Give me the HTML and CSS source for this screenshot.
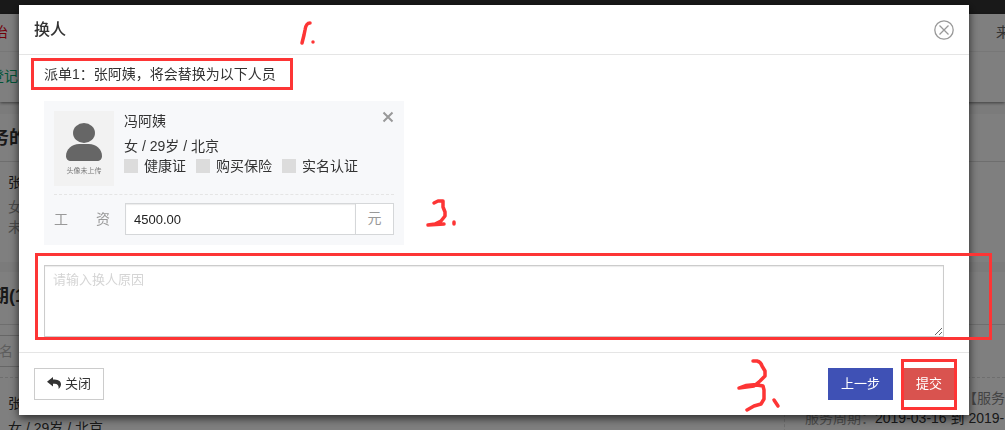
FILE: index.html
```html
<!DOCTYPE html>
<html lang="zh-CN">

<head>
    <meta charset="UTF-8">
    <meta name="viewport" content="width=device-width, initial-scale=1.0">
    <title>换人</title>
    <link rel="stylesheet" href="styles.css">
</head>

<body>
    <div class="page">
        <div class="topbar"></div>
        <header class="header">
            <div class="nav">
                <span class="status">治</span>
                <span class="source">来</span>
            </div>
            <div class="tabs">
                <a href="#">登记</a>
            </div>
        </header>
        <section class="panel">
            <h2>务的</h2>
            <div class="person">
                <p class="name">张</p>
                <p>女</p>
                <p>未</p>
            </div>
        </section>
        <section class="panel period">
            <h2>期(1</h2>
            <div class="search">
                <input type="text" placeholder="名" aria-label="姓名">
            </div>
            <div class="record">
                <div class="record-person">
                    <p>张</p>
                    <p>女 / 29岁 / 北京</p>
                </div>
                <div class="record-order">
                    <p class="tag">【服务</p>
                    <p><span>服务周期：</span>2019-03-16 到 2019-</p>
                </div>
            </div>
        </section>
    </div>

    <div class="overlay">
        <div class="modal" role="dialog" aria-labelledby="modal-title">
            <div class="modal-header">
                <h1 id="modal-title">换人</h1>
                <svg class="mark mark-one" viewBox="0 0 20 26">
                    <path d="M12 3 Q8 3 7 10 L6 15 L4 23" />
                    <path d="M15 22 v.1" />
                </svg>
                <button type="button" class="close" aria-label="关闭窗口">
                    <svg viewBox="0 0 20 20">
                        <circle cx="10" cy="10" r="9.2" />
                        <path d="M5.5 5.5 L14.5 14.5 M14.5 5.5 L5.5 14.5" />
                    </svg>
                </button>
            </div>

            <div class="modal-body">
                <p class="notice">派单1：张阿姨，将会替换为以下人员</p>

                <div class="card">
                    <div class="card-info">
                        <div class="avatar">
                            <svg viewBox="0 0 36 38">
                                <ellipse cx="18" cy="10" rx="11" ry="10" />
                                <path d="M0 33 C0 26 6 21 13 21 H23 C30 21 36 26 36 33 C36 36 34 38 31 38 H5 C2 38 0 36 0 33 Z" />
                            </svg>
                            <span>头像未上传</span>
                        </div>
                        <div class="details">
                            <p class="name">冯阿姨</p>
                            <p>女 / 29岁 / 北京</p>
                            <div class="checks">
                                <label><input type="checkbox">健康证</label>
                                <label><input type="checkbox">购买保险</label>
                                <label><input type="checkbox">实名认证</label>
                            </div>
                        </div>
                        <button type="button" class="remove" aria-label="移除">
                            <svg viewBox="0 0 12 12">
                                <path d="M1.5 1.5 L10.5 10.5 M10.5 1.5 L1.5 10.5" />
                            </svg>
                        </button>
                    </div>
                    <div class="salary">
                        <label for="salary">工 资</label>
                        <input type="text" id="salary" value="4500.00">
                        <span class="unit">元</span>
                    </div>
                    <svg class="mark mark-two" viewBox="0 0 36 32">
                        <path d="M9 5 L13 3 L18 3 L18 9 L20 14 L20 18 L16 23 L10 26 L3 27 L19 26" />
                        <path d="M29 24 v2" />
                    </svg>
                </div>

                <div class="reason">
                    <textarea placeholder="请输入换人原因" aria-label="换人原因"></textarea>
                </div>
            </div>

            <div class="modal-footer">
                <button type="button" class="btn btn-default">
                    <svg viewBox="0 0 14 12">
                        <path d="M6 0 L0 4.7 L6 9.4 V6.8 C10 6.6 12 7.8 11.6 12 C13.4 10.4 14 8.4 14 7 C13.7 3.8 10.5 2.6 6 2.6 Z" />
                    </svg>
                    关闭
                </button>
                <div class="actions">
                    <svg class="mark mark-three" viewBox="0 0 48 56">
                        <path d="M18 4 H22 Q26 5 27 9 L30 14 V19 L25 24 L19 29 L4 31 Q15 26 28 29 L29 33 V42 L26 47 L19 49 L12 53" />
                        <path d="M39 43 L43 49" />
                    </svg>
                    <button type="button" class="btn btn-primary">上一步</button>
                    <button type="submit" class="btn btn-danger">提交</button>
                </div>
            </div>
        </div>
    </div>
</body>

</html>
```
FILE: styles.css
```css
*,
*::before,
*::after {
    margin: 0;
    padding: 0;
    box-sizing: border-box;
}

body {
    font-family: "Liberation Sans", "Noto Sans CJK SC", sans-serif;
    font-size: 14px;
    line-height: 20px;
    color: #333;
    background-color: #f7f7f7;
    overflow: hidden;
}

button,
input,
textarea {
    font-family: inherit;
}

/* page behind the dialog */
.page {
    height: 100vh;
    overflow: hidden;
}

.topbar {
    height: 14px;
    background-color: #333;
}

.header {
    background-color: #fff;
    box-shadow: 0 1px 3px rgba(0, 0, 0, 0.5);
    margin-bottom: 12px;
}

.nav {
    display: flex;
    justify-content: space-between;
    padding: 8px 0 9px;
    margin: 0 -5px 0 -6px;
    border-bottom: 1px solid #eee;
}

.status {
    color: #e60012;
}

.source {
    color: #666;
}

.tabs {
    height: 50px;
    padding: 14px 0;
    margin-left: -10px;
}

.tabs a {
    color: #00a870;
    text-decoration: none;
}

.panel {
    height: 148px;
    margin-bottom: 10px;
    background-color: #fff;
}

.panel h2 {
    height: 48px;
    font-size: 18px;
    line-height: 48px;
    text-indent: -9px;
    border-bottom: 1px solid #ddd;
}

.person {
    padding: 10px 8px;
    color: #999;
}

.person .name {
    color: #333;
    margin-bottom: 5px;
}

.period {
    height: auto;
}

.period h2 {
    height: 53px;
}

.search {
    padding: 10px 0;
    border-bottom: 1px dashed #ddd;
}

.search input {
    width: 200px;
    height: 32px;
    font-size: 14px;
    margin-left: -10px;
    padding-left: 8px;
    border: 1px solid #ccc;
}

.search input::placeholder {
    color: #bbb;
}

.record {
    display: flex;
    justify-content: space-between;
    white-space: nowrap;
}

.record-person {
    padding: 15px 8px;
}

.record-person p {
    margin-bottom: 5px;
}

.record-order {
    width: 221px;
    padding: 10px 0 10px 20px;
    border-left: 1px dashed #ddd;
}

.record-order .tag {
    text-align: right;
    color: #888;
}

.record-order span {
    color: #999;
}

/* dialog */
.overlay {
    position: fixed;
    inset: 0;
    padding: 5px 36px 15px 19px;
    background-color: rgba(0, 0, 0, 0.5);
}

.modal {
    background-color: #fff;
    box-shadow: 0 3px 9px rgba(0, 0, 0, 0.7);
}

.modal-header {
    position: relative;
    display: flex;
    justify-content: space-between;
    align-items: center;
    height: 50px;
    padding: 0 15px;
    border-bottom: 1px solid #e5e5e5;
}

.modal-header h1 {
    font-size: 16px;
    font-weight: 500;
}

.close,
.remove {
    border: none;
    background: none;
    cursor: pointer;
    line-height: 0;
}

.close svg {
    width: 20px;
    height: 20px;
    fill: none;
    stroke: #999;
    stroke-width: 1.3;
}

.modal-body {
    padding: 3px 25px 15px;
}

.notice {
    width: fit-content;
    margin: 0 0 11px -13px;
    padding: 3px 14px 3px 10px;
    border: 3px solid #fd3535;
}

.card {
    position: relative;
    width: 360px;
    padding: 10px;
    background-color: #f7f8fa;
}

.card-info {
    display: flex;
    gap: 10px;
    padding-bottom: 8px;
    border-bottom: 1px dashed #e5e5e5;
}

.avatar {
    display: flex;
    flex-direction: column;
    align-items: center;
    width: 60px;
    height: 75px;
    padding-top: 12px;
    background-color: #f2f2f2;
}

.avatar svg {
    width: 36px;
    height: 38px;
    fill: #666;
}

.avatar span {
    font-size: 7px;
    line-height: 20px;
    color: #777;
    white-space: nowrap;
}

.details {
    flex: 1;
}

.details .name {
    margin-bottom: 5px;
}

.checks {
    display: flex;
    gap: 10px;
}

.checks label {
    display: flex;
    align-items: center;
    gap: 6px;
    white-space: nowrap;
}

.checks input {
    appearance: none;
    width: 14px;
    height: 14px;
    background-color: #dcdcdc;
}

.remove {
    align-self: flex-start;
}

.remove svg {
    width: 12px;
    height: 12px;
    fill: none;
    stroke: #999;
    stroke-width: 2;
}

.salary {
    display: flex;
    align-items: center;
    padding-top: 8px;
}

.salary label {
    width: 56px;
    margin-right: 15px;
    color: #999;
    text-align-last: justify;
}

.salary input {
    flex: 1;
    min-width: 0;
    height: 32px;
    padding: 0 8px;
    font-size: 13px;
    color: #222;
    border: 1px solid #d5d7d9;
    box-shadow: inset 0 1px 1px rgba(0, 0, 0, 0.08);
}

.unit {
    width: 38px;
    height: 32px;
    line-height: 28px;
    text-align: center;
    color: #999;
    background-color: #fff;
    border: 1px solid #d5d7d9;
    border-left: none;
}

.reason {
    position: relative;
    margin-top: 20px;
}

.reason textarea {
    display: block;
    width: 100%;
    height: 72px;
    padding: 4px 8px;
    font-size: 13px;
    line-height: 20px;
    border: 1px solid #ccc;
    box-shadow: inset 0 1px 1px rgba(0, 0, 0, 0.08);
}

.reason textarea::placeholder {
    color: #d5d5d5;
}

.modal-footer {
    display: flex;
    justify-content: space-between;
    padding: 15px 14px 15px 15px;
    border-top: 1px solid #e5e5e5;
}

.btn {
    height: 32px;
    padding: 0 12px 3px;
    font-size: 13px;
    border: 1px solid transparent;
    cursor: pointer;
}

.btn-default {
    display: flex;
    align-items: center;
    gap: 4px;
    color: #333;
    background-color: #fff;
    border-color: #ccc;
}

.btn-default svg {
    width: 14px;
    height: 12px;
    fill: #333;
}

.btn-primary {
    color: #fff;
    background-color: #3f51b5;
}

.btn-danger {
    color: #fff;
    background-color: #d9534f;
}

.actions {
    position: relative;
    display: flex;
    gap: 10px;
}

/* red notes drawn over the dialog */
.reason::after,
.actions::after {
    content: "";
    position: absolute;
    border: 3px solid #fd3535;
    pointer-events: none;
}

.reason::after {
    inset: -12px -48px -3px -9px;
}

.actions::after {
    width: 56px;
    top: -9px;
    right: -2px;
    bottom: -10px;
}

.mark {
    position: absolute;
    fill: none;
    stroke: #fd3535;
    stroke-width: 3.5;
    stroke-linecap: round;
    stroke-linejoin: round;
}

.mark-one {
    left: 279px;
    top: 15px;
    width: 20px;
    height: 26px;
}

.mark-two {
    left: 381px;
    top: 97px;
    width: 36px;
    height: 32px;
}

.mark-three {
    right: 100%;
    top: -11px;
    width: 48px;
    height: 56px;
    margin-right: 45px;
}
```
